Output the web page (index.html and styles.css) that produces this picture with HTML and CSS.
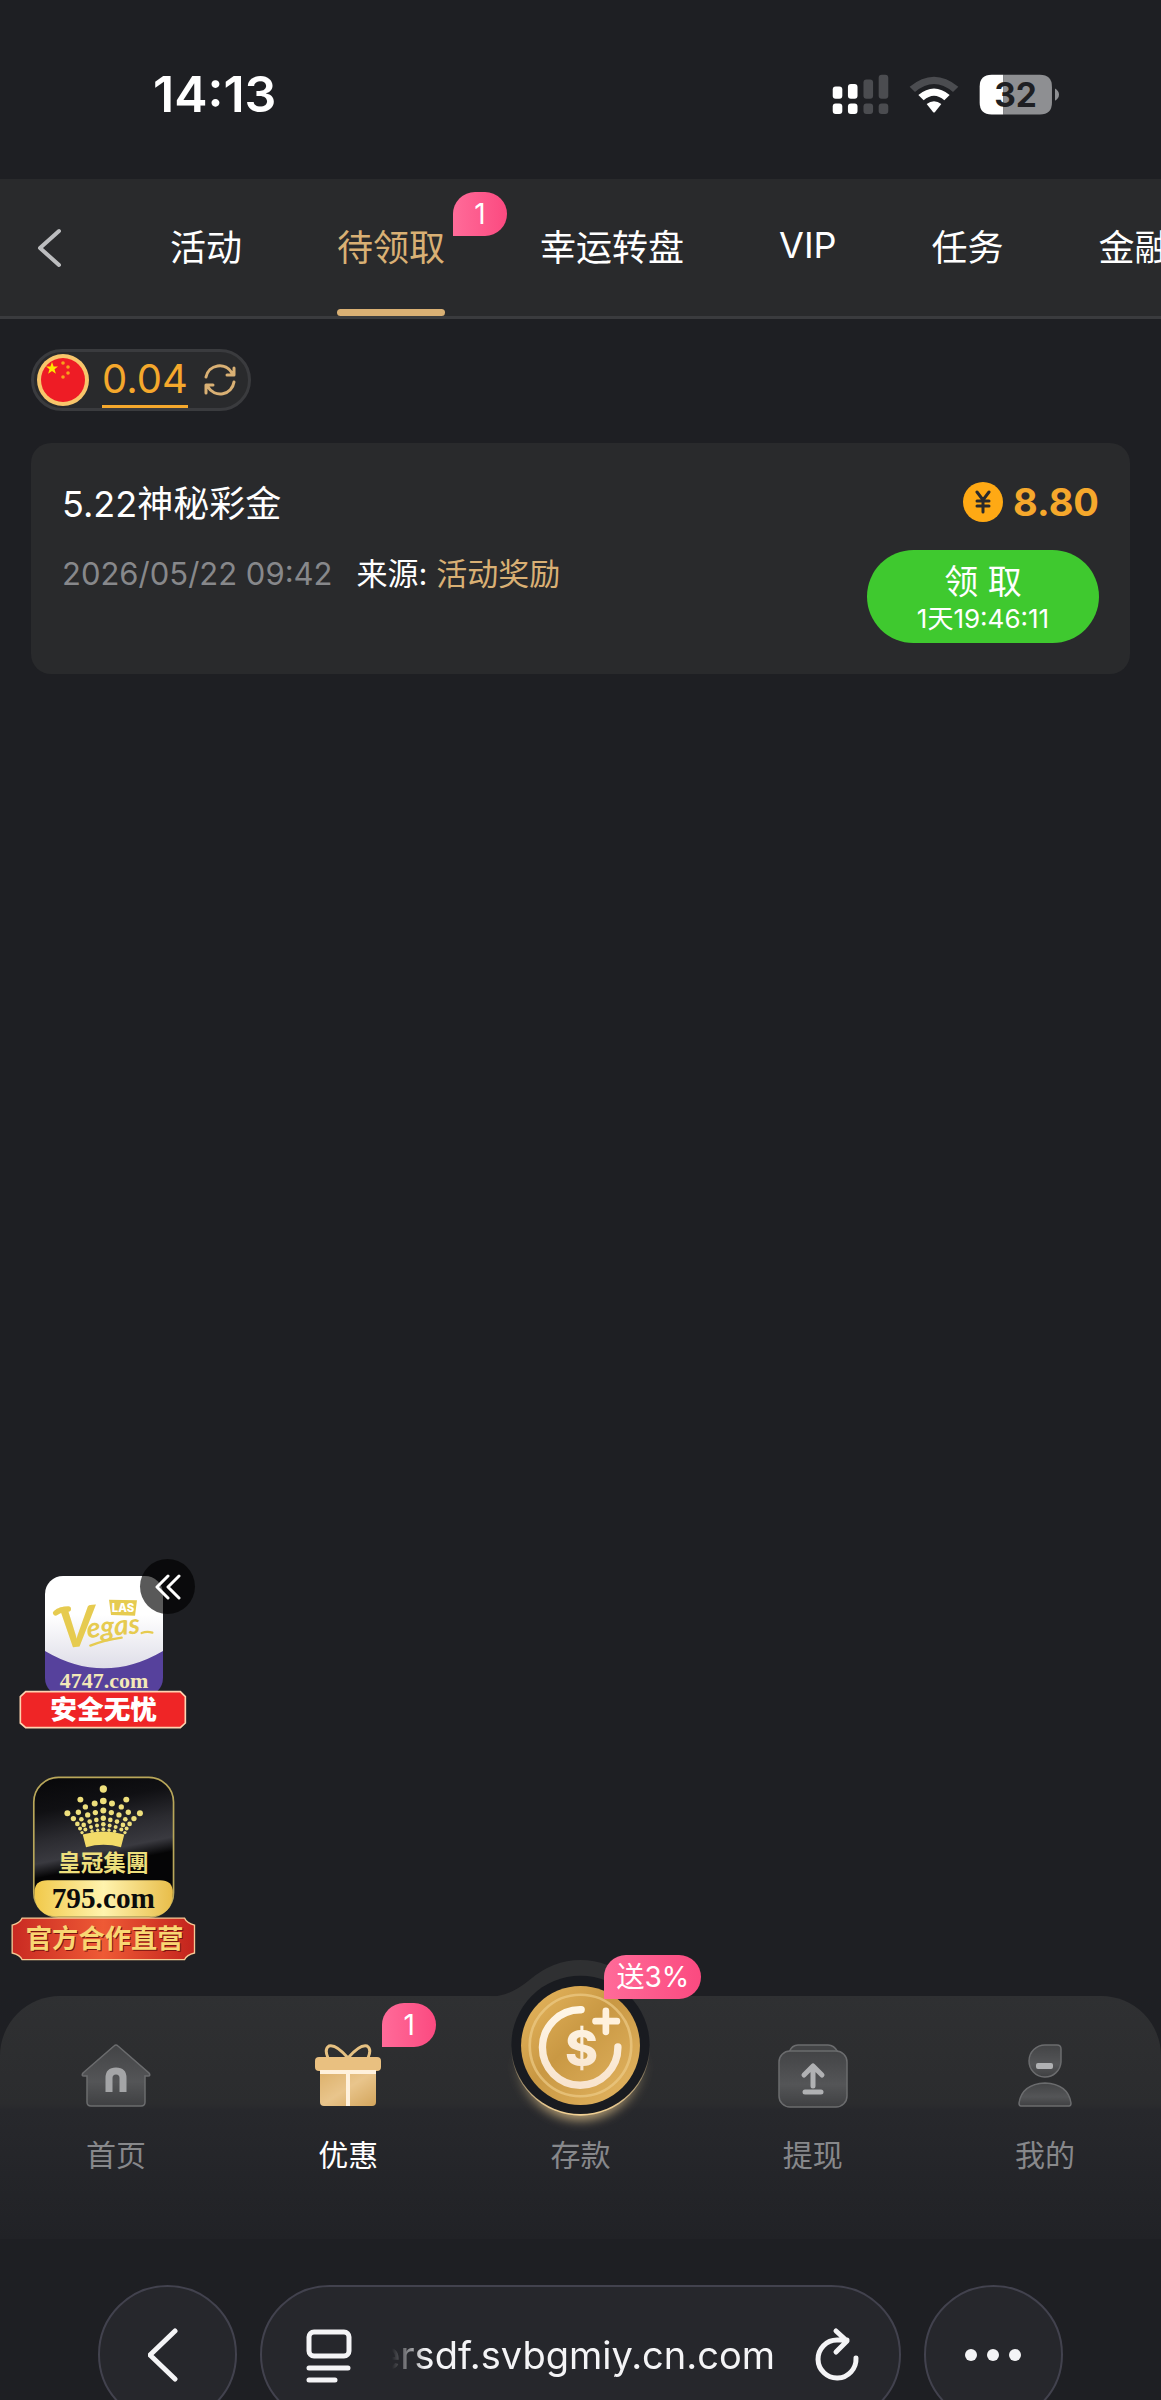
FILE: index.html
```html
<!DOCTYPE html>
<html lang="zh-CN">
<head>
    <meta charset="UTF-8">
    <meta name="viewport" content="width=device-width, initial-scale=1.0">
    <title>待领取</title>
    <link rel="stylesheet" href="styles.css">
</head>
<body>
    <div class="status-bar">
        <span class="clock">14:13</span>
        <div class="status-icons">
            <svg width="57" height="41" viewBox="96 100 172 124">
                <g fill="#fff">
                    <rect x="98" y="138" width="29" height="37" rx="9"/>
                    <rect x="144" y="130" width="29" height="45" rx="9"/>
                    <rect x="98" y="189" width="29" height="32" rx="9"/>
                    <rect x="144" y="189" width="29" height="32" rx="9"/>
                </g>
                <g fill="#4b4c50">
                    <rect x="191" y="117" width="29" height="58" rx="9"/>
                    <rect x="237" y="102" width="29" height="73" rx="9"/>
                    <rect x="191" y="189" width="29" height="32" rx="9"/>
                    <rect x="237" y="189" width="29" height="32" rx="9"/>
                </g>
            </svg>
            <svg width="50" height="40" viewBox="328 100 150 120">
                <path d="M330 138Q403 78 476 138L460 154Q403 106 346 154Z" fill="#4b4c50"/>
                <path d="M356 163Q403 124 450 163L434 179Q403 152 372 179Z" fill="#fff"/>
                <path d="M381 190Q403 173 425 190L406 214Q403 217 400 214Z" fill="#fff"/>
            </svg>
            <svg width="81" height="41" viewBox="538 100 242 122">
                <path d="M576 102H610V221H576Q540 221 540 185V138Q540 102 576 102Z" fill="#fff"/>
                <path d="M610 102H720Q756 102 756 138V185Q756 221 720 221H610Z" fill="#8e8f92"/>
                <path d="M765 143Q777 150 777 161Q777 173 765 180Z" fill="#8e8f92"/>
                <text x="647" y="197" text-anchor="middle" class="battery-text">32</text>
            </svg>
        </div>
    </div>

    <header class="top-bar">
        <button type="button" class="back-button" aria-label="返回">
            <svg width="26" height="42" viewBox="0 0 26 42" fill="none" stroke="#bcbdbf" stroke-width="4" stroke-linecap="round" stroke-linejoin="round">
                <path d="M23 4L4 21L23 38"/>
            </svg>
        </button>
        <nav class="tabs">
            <a href="#" class="tab">活动</a>
            <a href="#" class="tab active">待领取<span class="badge">1</span></a>
            <a href="#" class="tab">幸运转盘</a>
            <a href="#" class="tab">VIP</a>
            <a href="#" class="tab">任务</a>
            <a href="#" class="tab">金融</a>
        </nav>
    </header>

    <main class="content">
        <div class="balance">
            <svg width="54" height="54" viewBox="0 0 54 54">
                <circle cx="27" cy="27" r="26" fill="#f8c66b"/>
                <circle cx="27" cy="27" r="22" fill="#ee1c25"/>
                <path d="M16 9L17.600 13.600H22L18.500 16.300L19.900 20.800L16 18.100L12.100 20.800L13.500 16.300L10 13.600H14.400Z" fill="#ffe600"/>
                <g fill="#f9a01b">
                    <circle cx="27" cy="10" r="1.800"/>
                    <circle cx="32" cy="14" r="1.800"/>
                    <circle cx="32" cy="20" r="1.800"/>
                    <circle cx="27" cy="24" r="1.800"/>
                </g>
            </svg>
            <span class="balance-amount">0.04</span>
            <button type="button" class="refresh-button" aria-label="刷新余额">
                <svg width="32" height="34" viewBox="0 0 32 34" fill="none" stroke="#d9b074" stroke-width="3" stroke-linecap="round" stroke-linejoin="round">
                    <path d="M2 14A14 14 0 0 1 28 10M30 5V12H23"/>
                    <path d="M30 19A14 14 0 0 1 4 24M2 30V22H9"/>
                </svg>
            </button>
        </div>

        <section class="reward-card">
            <div class="reward-info">
                <h1>5.22神秘彩金</h1>
                <p>
                    <time>2026/05/22 09:42</time>
                    <span>来源: <b>活动奖励</b></span>
                </p>
            </div>
            <div class="reward-action">
                <div class="reward-amount">
                    <svg width="40" height="40" viewBox="0 0 40 40">
                        <circle cx="20" cy="20" r="20" fill="#ffa914"/>
                        <path d="M14 10L20 18L26 10M20 18V30M14 19H26M14 24H26" fill="none" stroke="#292a2c" stroke-width="3" stroke-linecap="round"/>
                    </svg>
                    <span>8.80</span>
                </div>
                <button type="button" class="claim-button">
                    <span>领 取</span>
                    <small>1天19:46:11</small>
                </button>
            </div>
        </section>

        <aside class="ads">
            <a href="#" aria-label="4747.com">
                <svg width="168" height="154" viewBox="56 104 504 462">
                    <defs>
                        <clipPath id="vegasClip"><rect x="134" y="107" width="354" height="360" rx="54"/></clipPath>
                        <linearGradient id="vegasBg" x1="0" y1="0" x2="0" y2="1">
                            <stop offset="0.4" stop-color="#fff"/>
                            <stop offset="1" stop-color="#dcdbe6"/>
                        </linearGradient>
                    </defs>
                    <g clip-path="url(#vegasClip)">
                        <rect x="134" y="107" width="354" height="290" fill="url(#vegasBg)"/>
                        <path d="M134 332Q310 436 488 332V470H134Z" fill="#56419c"/>
                    </g>
                    <path d="M326 178L410 180L404 226L332 224Z" fill="#e6cb50"/>
                    <text x="368" y="215" text-anchor="middle" class="las-text">LAS</text>
                    <path d="M166 218Q180 206 204 206" stroke="#e6cb50" stroke-width="16" stroke-linecap="round" fill="none"/>
                    <text x="180" y="324" transform="rotate(-5 180 324)" class="vegas-text"><tspan class="vegas-initial">V</tspan><tspan x="264" y="300">egas</tspan></text>
                    <path d="M270 316Q310 300 364 292M424 278Q440 272 456 277" stroke="#e6cb50" stroke-width="7" stroke-linecap="round" fill="none"/>
                    <text x="311" y="443" text-anchor="middle" class="vegas-url">4747.com</text>
                    <path d="M76 454H540L555 469V548L540 562H76L60 548V469Z" fill="#ef2526" stroke="#ffd3b0" stroke-width="5"/>
                    <text x="310" y="537" text-anchor="middle" class="vegas-ribbon">安全无忧</text>
                </svg>
            </a>
            <a href="#" aria-label="795.com">
                <svg width="186" height="185" viewBox="30 78 558 556">
                    <defs>
                        <linearGradient id="crownBg" x1="0" y1="0" x2="0.2" y2="1">
                            <stop offset="0" stop-color="#070709"/>
                            <stop offset="0.25" stop-color="#101013"/>
                            <stop offset="0.45" stop-color="#2b2b30"/>
                            <stop offset="0.6" stop-color="#3a3a40"/>
                            <stop offset="0.7" stop-color="#050506"/>
                        </linearGradient>
                        <linearGradient id="goldBand" x1="0" y1="0" x2="1" y2="0">
                            <stop offset="0" stop-color="#f1c94a"/>
                            <stop offset="0.5" stop-color="#fff3ae"/>
                            <stop offset="1" stop-color="#e8bd4a"/>
                        </linearGradient>
                        <linearGradient id="redRibbon" x1="0" y1="0" x2="1" y2="0">
                            <stop offset="0" stop-color="#c92a22"/>
                            <stop offset="0.5" stop-color="#ee5a35"/>
                            <stop offset="1" stop-color="#c3231d"/>
                        </linearGradient>
                    </defs>
                    <rect x="101" y="82" width="420" height="420" rx="74" fill="url(#crownBg)" stroke="#b9a75a" stroke-width="5"/>
                    <path d="M103 428Q103 391 142 391H480Q519 391 519 428Q519 500 448 500H174Q103 500 103 428Z" fill="url(#goldBand)"/>
                    <g fill="#eedf7c">
                        <circle cx="310" cy="117" r="11"/><circle cx="310" cy="153" r="10"/><circle cx="310" cy="182" r="9"/><circle cx="310" cy="205" r="8"/><circle cx="310" cy="223" r="7"/><circle cx="310" cy="238" r="6"/>
                        <circle cx="241" cy="149" r="9"/><circle cx="256" cy="171" r="8"/><circle cx="263" cy="195" r="8"/><circle cx="269" cy="215" r="7"/><circle cx="273" cy="231" r="6"/><circle cx="276" cy="244" r="5"/>
                        <circle cx="379" cy="149" r="9"/><circle cx="364" cy="171" r="8"/><circle cx="357" cy="195" r="8"/><circle cx="351" cy="215" r="7"/><circle cx="347" cy="231" r="6"/><circle cx="344" cy="244" r="5"/>
                        <circle cx="284" cy="161" r="9"/><circle cx="286" cy="188" r="8"/><circle cx="289" cy="210" r="7"/><circle cx="291" cy="227" r="6"/><circle cx="293" cy="241" r="5"/>
                        <circle cx="336" cy="161" r="9"/><circle cx="334" cy="188" r="8"/><circle cx="331" cy="210" r="7"/><circle cx="329" cy="227" r="6"/><circle cx="327" cy="241" r="5"/>
                        <circle cx="235" cy="187" r="8"/><circle cx="244" cy="208" r="7"/><circle cx="251" cy="225" r="7"/><circle cx="256" cy="239" r="6"/>
                        <circle cx="385" cy="187" r="8"/><circle cx="376" cy="208" r="7"/><circle cx="369" cy="225" r="7"/><circle cx="364" cy="239" r="6"/>
                        <circle cx="202" cy="190" r="9"/><circle cx="220" cy="206" r="8"/><circle cx="232" cy="222" r="7"/><circle cx="240" cy="236" r="6"/><circle cx="246" cy="248" r="5"/>
                        <circle cx="420" cy="190" r="9"/><circle cx="402" cy="206" r="8"/><circle cx="389" cy="222" r="7"/><circle cx="380" cy="236" r="6"/><circle cx="375" cy="248" r="5"/>
                    </g>
                    <path d="M248 254Q310 236 373 254L363 292Q310 277 258 292Z" fill="#f3db68"/>
                    <text x="310" y="363" text-anchor="middle" class="crown-name">皇冠集團</text>
                    <text x="310" y="474" text-anchor="middle" class="crown-url">795.com</text>
                    <path d="M66 505H554Q560 520 584 526V610Q560 616 554 630H66Q60 616 36 610V526Q60 520 66 505Z" fill="url(#redRibbon)" stroke="#f5c995" stroke-width="4"/>
                    <text x="317" y="597" text-anchor="middle" class="crown-ribbon-shadow">官方合作直营</text>
                    <text x="314" y="594" text-anchor="middle" class="crown-ribbon">官方合作直营</text>
                </svg>
            </a>
            <button type="button" class="ads-toggle" aria-label="收起">
                <svg width="26" height="26" viewBox="0 0 26 26" fill="none" stroke="#fff" stroke-width="3" stroke-linecap="round" stroke-linejoin="round">
                    <path d="M13 2L2 13L13 24M24 2L13 13L24 24"/>
                </svg>
            </button>
        </aside>
    </main>

    <nav class="bottom-nav">
        <a href="#" class="nav-item">
            <svg width="72" height="64" viewBox="0 0 72 64">
                <defs>
                    <linearGradient id="greyFill" x1="0" y1="0" x2="0" y2="1">
                        <stop offset="0" stop-color="#434446"/>
                        <stop offset="0.6" stop-color="#545557"/>
                        <stop offset="1" stop-color="#3f4042"/>
                    </linearGradient>
                </defs>
                <path d="M34 2Q36 0 38 2L69 29Q71 32 68 32H65V58Q65 62 61 62H11Q7 62 7 58V32H4Q1 32 3 29Z" fill="url(#greyFill)" stroke="#6b6c6e" stroke-width="1.500"/>
                <path d="M29 48V34Q29 27 36 27Q43 27 43 34V48" fill="none" stroke="#a4a5a7" stroke-width="7"/>
            </svg>
            <span>首页</span>
        </a>
        <a href="#" class="nav-item active">
            <svg width="68" height="64" viewBox="0 0 68 64">
                <defs>
                    <linearGradient id="giftFill" x1="0" y1="0" x2="1" y2="1">
                        <stop offset="0" stop-color="#dcb06a"/>
                        <stop offset="0.5" stop-color="#e9c58c"/>
                        <stop offset="1" stop-color="#d3a55c"/>
                    </linearGradient>
                </defs>
                <path d="M34 14Q22 0 15 2Q10 5 14 14M34 14Q46 0 53 2Q58 5 54 14" fill="none" stroke="#e6c182" stroke-width="3"/>
                <path d="M6 26H62V58Q62 62 58 62H10Q6 62 6 58Z" fill="url(#giftFill)"/>
                <rect x="1" y="13" width="66" height="14" rx="4" fill="#e9c080"/>
                <path d="M6 28H62M34 28V62" stroke="#fff1dc" stroke-width="4"/>
            </svg>
            <span>优惠</span>
            <span class="badge">1</span>
        </a>
        <a href="#" class="nav-item deposit">
            <svg width="189" height="187" viewBox="110 60 566 560">
                <defs>
                    <linearGradient id="coinFill" x1="0" y1="0" x2="1" y2="1">
                        <stop offset="0" stop-color="#e8b860"/>
                        <stop offset="0.45" stop-color="#c99843"/>
                        <stop offset="1" stop-color="#e5b764"/>
                    </linearGradient>
                    <linearGradient id="coinText" x1="0" y1="0" x2="0" y2="1">
                        <stop offset="0" stop-color="#fff6e6"/>
                        <stop offset="1" stop-color="#f8e4ce"/>
                    </linearGradient>
                    <linearGradient id="rimGlow" x1="0" y1="0" x2="0" y2="1">
                        <stop offset="0.5" stop-color="#f3d295" stop-opacity="0"/>
                        <stop offset="1" stop-color="#f3d295"/>
                    </linearGradient>
                    <filter id="glow" x="-20%" y="-20%" width="140%" height="140%">
                        <feGaussianBlur stdDeviation="16"/>
                    </filter>
                </defs>
                <path d="M120 200Q180 200 240 150Q310 90 393 90Q476 90 546 150Q606 200 666 200V212H120Z" fill="#2f3032"/>
                <circle cx="393" cy="372" r="196" fill="url(#rimGlow)" opacity="0.8" filter="url(#glow)"/>
                <circle cx="393" cy="348" r="208" fill="url(#rimGlow)"/>
                <circle cx="393" cy="344" r="207" fill="#191b20"/>
                <circle cx="393" cy="346" r="178" fill="url(#coinFill)"/>
                <circle cx="393" cy="346" r="152" fill="none" stroke="#edca86" stroke-width="8" opacity="0.7"/>
                <path d="M395 239A113 113 0 1 0 505 350" fill="none" stroke="url(#coinText)" stroke-width="22" stroke-linecap="round"/>
                <path d="M469 242V305M438 273H502" stroke="#fff1dc" stroke-width="20" stroke-linecap="round"/>
                <text x="396" y="406" text-anchor="middle" class="coin-text">$</text>
            </svg>
            <span>存款</span>
            <span class="badge">送3%</span>
        </a>
        <a href="#" class="nav-item">
            <svg width="72" height="64" viewBox="0 0 72 64">
                <path d="M12 8Q15 1 21 1H51Q57 1 61 8" fill="#434446" stroke="#6b6c6e" stroke-width="1.500"/>
                <rect x="2" y="7" width="68" height="56" rx="11" fill="url(#greyFill)" stroke="#6b6c6e" stroke-width="1.500"/>
                <path d="M36 42V24M27 31L36 22L45 31" fill="none" stroke="#b0b1b3" stroke-width="5" stroke-linecap="round" stroke-linejoin="round"/>
                <path d="M28 48H44" stroke="#b0b1b3" stroke-width="5" stroke-linecap="round"/>
            </svg>
            <span>提现</span>
        </a>
        <a href="#" class="nav-item">
            <svg width="54" height="64" viewBox="0 0 54 64">
                <path d="M27 1H39Q43 1 43 5V18A16 16 0 1 1 27 1Z" fill="url(#greyFill)" stroke="#6b6c6e" stroke-width="1.500"/>
                <rect x="18" y="19" width="17" height="6" rx="2" fill="#b0b1b3"/>
                <path d="M3 62Q1 62 1 59Q4 40 27 39Q50 40 53 59Q53 62 51 62Z" fill="url(#greyFill)" stroke="#6b6c6e" stroke-width="1.500"/>
            </svg>
            <span>我的</span>
        </a>
    </nav>

    <footer class="browser-bar">
        <button type="button" class="round-button" aria-label="后退">
            <svg width="40" height="56" viewBox="0 0 40 56" fill="none" stroke="#f4f4f6" stroke-width="5" stroke-linecap="round" stroke-linejoin="round">
                <path d="M27 4L2 28L27 52"/>
            </svg>
        </button>
        <div class="address">
            <button type="button" aria-label="页面菜单">
                <svg width="46" height="56" viewBox="0 0 46 56" fill="none" stroke="#f4f4f6" stroke-width="5" stroke-linecap="round">
                    <rect x="3" y="5" width="40" height="24" rx="5"/>
                    <path d="M3 41H42M3 53H29"/>
                </svg>
            </button>
            <span class="url">ersdf.svbgmiy.cn.com</span>
            <button type="button" aria-label="重新加载">
                <svg width="44" height="56" viewBox="0 0 44 56" fill="none" stroke="#f4f4f6" stroke-width="5" stroke-linecap="round" stroke-linejoin="round">
                    <path d="M41 31A19 19 0 1 1 22 13H32M21 4L32 14L21 25"/>
                </svg>
            </button>
        </div>
        <button type="button" class="round-button" aria-label="更多">
            <svg width="58" height="14" viewBox="0 0 58 14" fill="#f4f4f6">
                <circle cx="6" cy="7" r="6"/>
                <circle cx="28" cy="7" r="6"/>
                <circle cx="50" cy="7" r="6"/>
            </svg>
        </button>
    </footer>
</body>
</html>
```
FILE: styles.css
```css
:root {
    --bg: #1e1f23;
    --panel: #292a2c;
    --line: #3a3b3e;
    --gold: #d9b074;
    --amber: #f5a82c;
    --muted: #87888b;
}

* {
    box-sizing: border-box;
    margin: 0;
    padding: 0;
}

body {
    display: flex;
    flex-direction: column;
    min-height: 100vh;
    background: var(--bg);
    color: #fff;
    font-family: Inter, "Noto Sans CJK SC", sans-serif;
    overflow-x: hidden;
}

svg {
    display: block;
    flex: none;
}

a {
    color: inherit;
    text-decoration: none;
}

button {
    background: none;
    border: none;
    color: inherit;
    font-family: inherit;
    cursor: pointer;
}

/* status bar */
.status-bar {
    display: flex;
    justify-content: space-between;
    align-items: center;
    padding: 69px 101px 60px 153px;
}

.clock {
    font-size: 50px;
    font-weight: 600;
    line-height: 50px;
}

.status-icons {
    display: flex;
    align-items: center;
    gap: 20px;
}

.battery-text {
    fill: #1e1f23;
    font-size: 100px;
    font-weight: 700;
}

/* top tabs */
.top-bar {
    display: flex;
    height: 140px;
    background: var(--panel);
    border-bottom: 3px solid var(--line);
}

.back-button {
    flex: none;
    width: 170px;
    padding-left: 36px;
}

.tabs {
    display: flex;
    gap: 95px;
    flex: 1;
    min-width: 0;
    overflow: hidden;
}

.tab {
    position: relative;
    display: flex;
    align-items: center;
    flex: none;
    padding-bottom: 5px;
    font-size: 36px;
}

.tab.active {
    color: var(--gold);
}

.tab.active::after {
    content: "";
    position: absolute;
    left: 0;
    bottom: 0;
    width: 100%;
    height: 7px;
    border-radius: 4px;
    background: var(--gold);
}

.badge {
    position: absolute;
    min-width: 54px;
    padding: 0 12px;
    border-radius: 22px 22px 22px 0;
    background: linear-gradient(90deg, #ff6b99, #fb4a80);
    color: #fff;
    font-size: 28px;
    line-height: 44px;
    text-align: center;
    white-space: nowrap;
}

.tab .badge {
    left: calc(100% + 8px);
    top: 13px;
}

/* content */
.content {
    position: relative;
    flex: 1;
    min-height: 1200px;
    padding: 30px 31px;
}

.balance {
    display: inline-flex;
    align-items: center;
    height: 62px;
    padding: 0 12px 0 2px;
    border: 3px solid var(--line);
    border-radius: 31px;
    background: var(--panel);
}

.balance-amount {
    margin: 0 16px 0 12px;
    border-bottom: 3px solid var(--amber);
    color: var(--amber);
    font-size: 40px;
    line-height: 53px;
}

.reward-card {
    display: flex;
    justify-content: space-between;
    margin-top: 32px;
    padding: 39px 31px 31px;
    border-radius: 20px;
    background: var(--panel);
}

.reward-info h1 {
    font-size: 36px;
    font-weight: 400;
    line-height: 44px;
}

.reward-info p {
    display: flex;
    gap: 24px;
    margin-top: 28px;
    font-size: 31px;
    line-height: 40px;
}

.reward-info time {
    color: var(--muted);
}

.reward-info b {
    color: var(--gold);
    font-weight: 400;
}

.reward-action {
    display: flex;
    flex-direction: column;
    align-items: flex-end;
    gap: 28px;
}

.reward-amount {
    display: flex;
    align-items: center;
    gap: 10px;
    color: var(--amber);
    font-size: 38px;
    font-weight: 700;
    line-height: 40px;
}

.claim-button {
    display: flex;
    flex-direction: column;
    align-items: center;
    justify-content: center;
    width: 232px;
    height: 93px;
    padding-top: 4px;
    border-radius: 47px;
    background: #3fc92f;
}

.claim-button span {
    font-size: 34px;
    line-height: 40px;
}

.claim-button small {
    font-size: 26px;
    line-height: 34px;
}

/* floating ads */
.ads {
    position: absolute;
    left: 10px;
    bottom: 35px;
    display: flex;
    flex-direction: column;
    align-items: center;
    gap: 47px;
}

.ads-toggle {
    position: absolute;
    top: -16px;
    right: 1px;
    display: flex;
    align-items: center;
    justify-content: center;
    width: 55px;
    height: 55px;
    border-radius: 50%;
    background: rgba(0, 0, 0, 0.65);
}

.las-text {
    fill: #fff;
    font-size: 34px;
    font-weight: 800;
}

.vegas-text {
    fill: #e6cb50;
    font-family: Lato, sans-serif;
    font-size: 84px;
    font-style: italic;
    font-weight: 700;
}

.vegas-initial {
    font-size: 168px;
}

.vegas-url {
    fill: #f3e8b8;
    font-family: "Liberation Serif", serif;
    font-size: 66px;
    font-weight: 700;
}

.vegas-ribbon {
    fill: #fff;
    font-size: 80px;
    font-weight: 900;
}

.crown-name {
    fill: #eedf7c;
    font-family: "Noto Sans CJK TC", sans-serif;
    font-size: 68px;
    font-weight: 700;
}

.crown-url {
    fill: #0c0c0c;
    font-family: "Liberation Serif", serif;
    font-size: 88px;
    font-weight: 700;
}

.crown-ribbon,
.crown-ribbon-shadow {
    fill: #f8d773;
    font-size: 79px;
    font-weight: 700;
}

.crown-ribbon-shadow {
    fill: #7a1410;
}

/* bottom navigation */
.bottom-nav {
    display: grid;
    grid-template-columns: repeat(5, 1fr);
    height: 243px;
    border-radius: 60px 60px 0 0;
    background: linear-gradient(#2f3032, #2b2c2e 108px, #27282c 114px, #212226);
}

.nav-item {
    position: relative;
    display: flex;
    flex-direction: column;
    align-items: center;
    gap: 28px;
    padding-top: 48px;
    color: var(--muted);
    font-size: 30px;
    line-height: 38px;
}

.nav-item.active {
    color: #fff;
}

.nav-item .badge {
    left: calc(50% + 34px);
    top: 7px;
}

.deposit {
    padding-top: 140px;
}

.deposit svg {
    position: absolute;
    top: -46px;
}

.deposit .badge {
    left: calc(50% + 24px);
    top: -41px;
}

.coin-text {
    fill: url(#coinText);
    font-size: 150px;
    font-weight: 800;
}

/* browser toolbar, runs off the lower edge */
.browser-bar {
    display: flex;
    gap: 23px;
    height: 161px;
    padding: 46px 98px 0;
    overflow: hidden;
}

.round-button,
.address {
    display: flex;
    align-items: center;
    justify-content: center;
    height: 139px;
    border: 2px solid #42424e;
    border-radius: 70px;
    background: #26272c;
}

.round-button {
    flex: none;
    width: 139px;
}

.address {
    flex: 1;
    min-width: 0;
    justify-content: space-between;
    padding: 0 40px 0 44px;
}

.url {
    flex: 1;
    margin: 0 40px;
    overflow: hidden;
    direction: rtl;
    color: #f4f4f6;
    font-size: 38px;
    line-height: 48px;
    text-align: left;
    white-space: nowrap;
    -webkit-mask-image: linear-gradient(90deg, transparent, #000 34px);
    mask-image: linear-gradient(90deg, transparent, #000 34px);
}
```
